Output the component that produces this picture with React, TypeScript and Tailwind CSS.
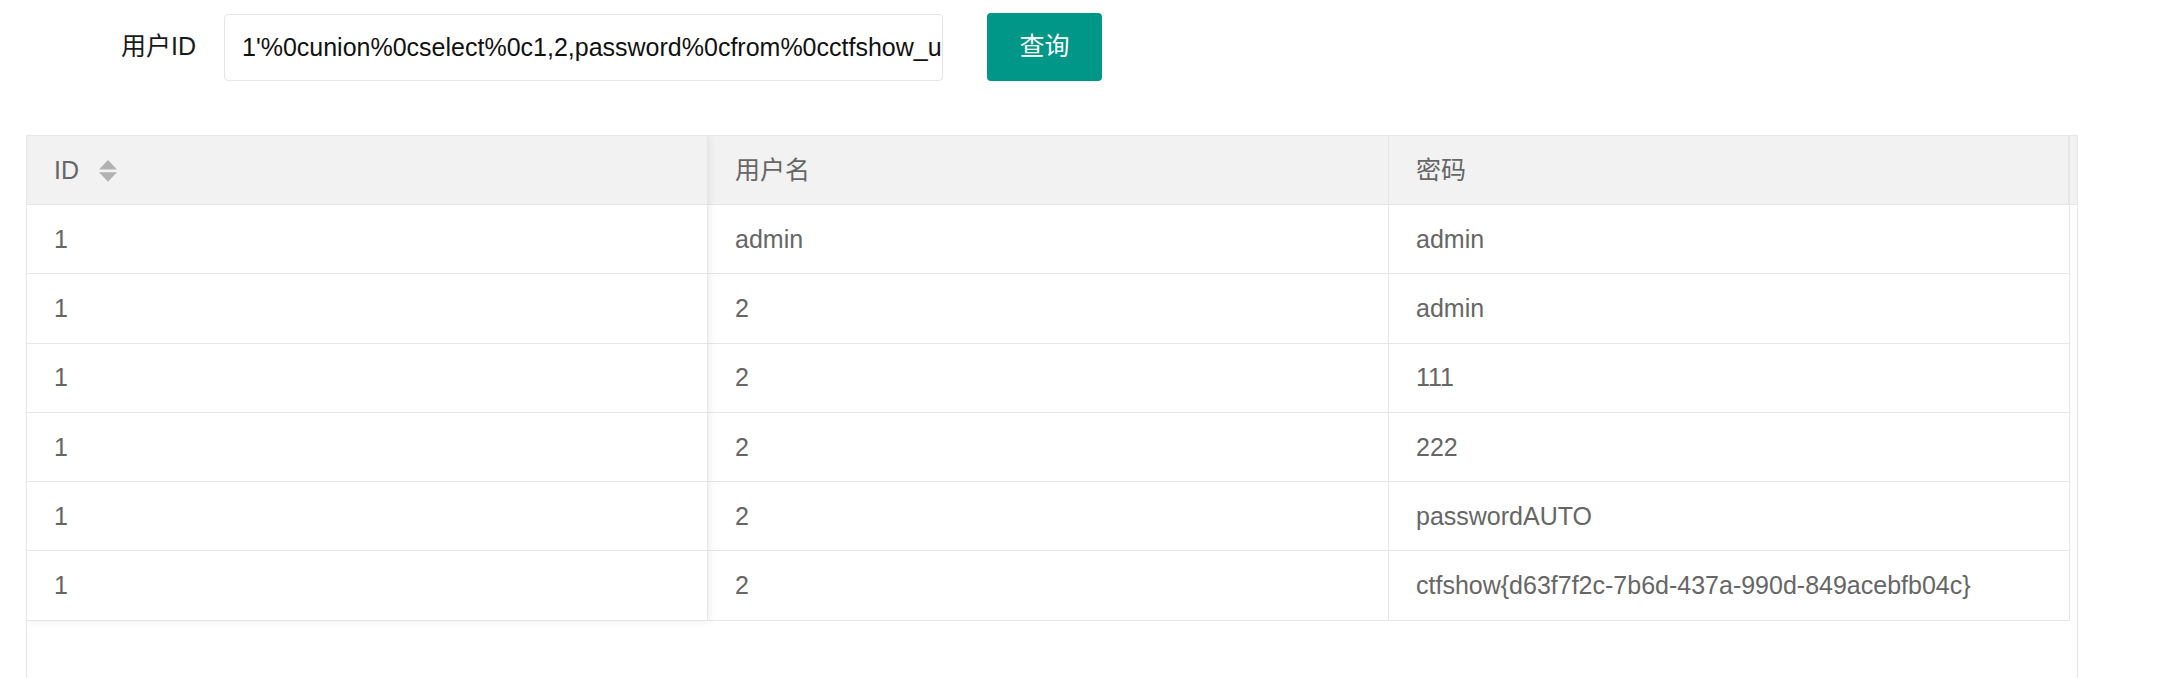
import { useState } from 'react'

const rows = [
  { id: '1', username: 'admin', password: 'admin' },
  { id: '1', username: '2', password: 'admin' },
  { id: '1', username: '2', password: '111' },
  { id: '1', username: '2', password: '222' },
  { id: '1', username: '2', password: 'passwordAUTO' },
  { id: '1', username: '2', password: 'ctfshow{d63f7f2c-7b6d-437a-990d-849acebfb04c}' },
]

const font = 'font-["Liberation_Sans","Noto_Sans_CJK_SC",sans-serif]'

function SortIcon() {
  return (
    <svg width="18" height="22" viewBox="0 0 18 22" className="ml-[20px] shrink-0">
      <polygon points="9,0 18,9.5 0,9.5" fill="#b2b2b2" />
      <polygon points="0,12.3 18,12.3 9,21.8" fill="#b2b2b2" />
    </svg>
  )
}

export default function App() {
  const [userId, setUserId] = useState("1'%0cunion%0cselect%0c1,2,password%0cfrom%0cctfshow_user%23")

  return (
    <div className={`h-[678px] overflow-hidden bg-white ${font}`}>
      {/* 查询表单 */}
      <div className="mt-[13px] flex items-center h-[68px]">
        <label className="w-[196px] text-right text-[25px] text-[#1a1a1a]">用户ID</label>
        <input
          value={userId}
          onChange={(e) => setUserId(e.target.value)}
          className="ml-[28px] w-[719px] h-[67px] pl-[17px] pr-[1px] border border-[#e6e6e6] rounded-[4px] bg-white text-[25px] text-[#111] outline-none"
        />
        <button className="ml-[44px] w-[115px] h-[68px] rounded-[4px] bg-[#009688] text-white text-[25px]">
          查询
        </button>
      </div>

      {/* 表格 */}
      <div className="mt-[54px] ml-[26px] w-[2052px] h-[600px] border border-[#e6e6e6] overflow-hidden flex text-[25px] text-[#666]">
        {/* 固定列 */}
        <div className="w-[681px] shrink-0 relative z-10 bg-white shadow-[1px_0_8px_rgba(0,0,0,0.08)] self-start">
          <div className="h-[69px] flex items-center pt-[2px] px-[27px] bg-[#f2f2f2] border-b border-r border-[#e6e6e6]">
            <span>ID</span>
            <SortIcon />
          </div>
          {rows.map((r, i) => (
            <div key={i} className="h-[69.3px] flex items-center pt-[1px] px-[27px] border-b border-r border-[#e6e6e6]">
              {r.id}
            </div>
          ))}
        </div>

        <div className="flex-1 flex flex-col">
          <div className="h-[69px] flex bg-[#f2f2f2] border-b border-[#e6e6e6]">
            <div className="w-[681px] flex items-center pt-[2px] px-[27px] border-r border-[#e6e6e6]">用户名</div>
            <div className="w-[681px] flex items-center pt-[2px] px-[27px] border-r-2 border-[#e6e6e6]">密码</div>
            <div className="flex-1" />
          </div>
          {rows.map((r, i) => (
            <div key={i} className="h-[69.3px] w-[1362px] flex border-b border-r border-[#e6e6e6]">
              <div className="w-[681px] flex items-center pt-[1px] px-[27px] border-r border-[#e6e6e6]">{r.username}</div>
              <div className="flex-1 flex items-center pt-[1px] px-[27px]">{r.password}</div>
            </div>
          ))}
        </div>
      </div>
    </div>
  )
}
